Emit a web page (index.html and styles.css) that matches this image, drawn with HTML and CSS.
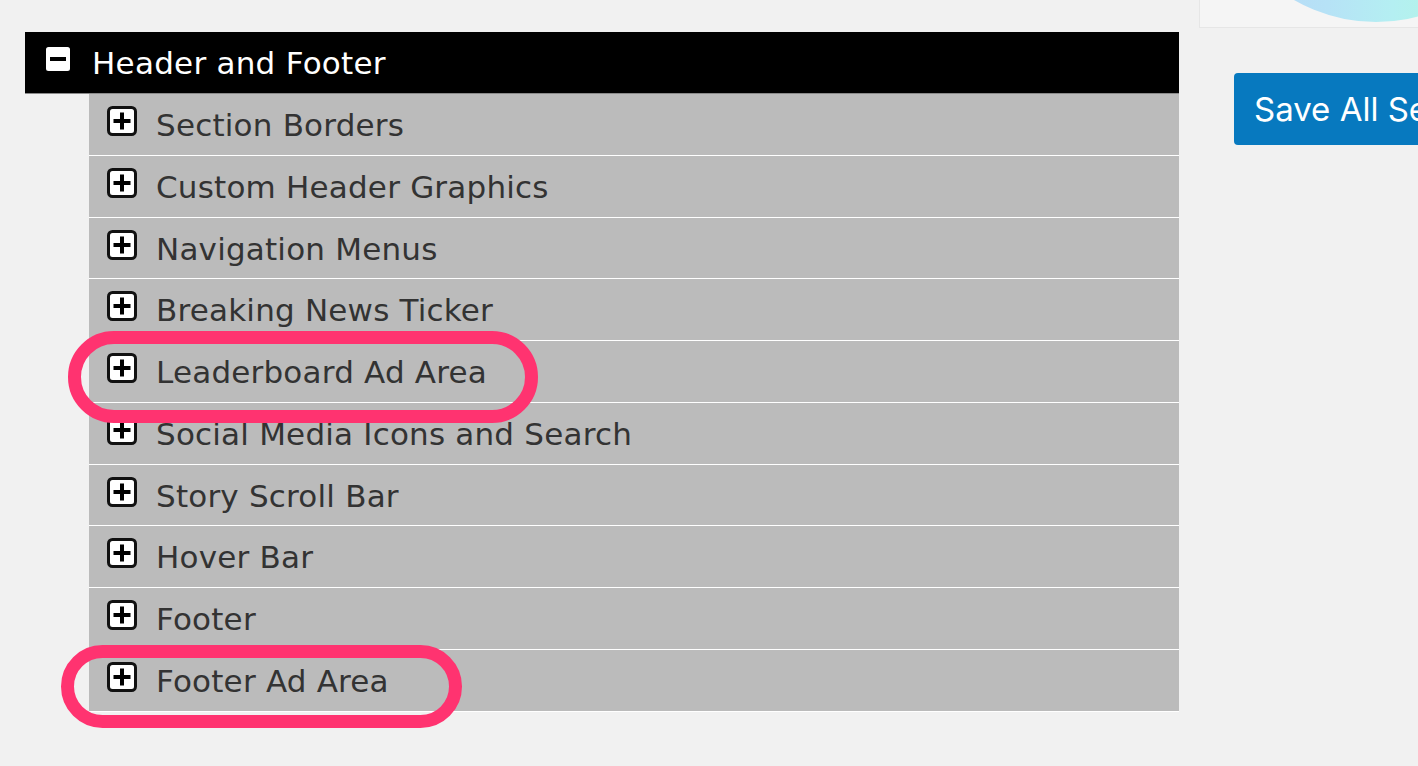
FILE: index.html
```html
<!DOCTYPE html>
<html lang="en">
<head>
<meta charset="utf-8">
<title>Header and Footer</title>
<link rel="stylesheet" href="styles.css">
</head>
<body>
<div class="page">
  <main class="main">
    <section class="group">
      <div class="group-head"><svg class="toggle" width="30" height="30" viewBox="0 0 30 30"><rect x="1.5" y="1.5" width="27" height="27" rx="4" fill="#fff" stroke="#000" stroke-width="3"/><rect x="7" y="13" width="16" height="4" fill="#000"/></svg><span class="group-title">Header and Footer</span></div>
      <ul class="items">
        <li class="item"><svg class="toggle" width="30" height="30" viewBox="0 0 30 30"><rect x="1.5" y="1.5" width="27" height="27" rx="4" fill="#fff" stroke="#111" stroke-width="3"/><rect x="6.5" y="13" width="17" height="4" fill="#000"/><rect x="13" y="6.5" width="4" height="17" fill="#000"/></svg><span>Section Borders</span></li>
        <li class="item"><svg class="toggle" width="30" height="30" viewBox="0 0 30 30"><rect x="1.5" y="1.5" width="27" height="27" rx="4" fill="#fff" stroke="#111" stroke-width="3"/><rect x="6.5" y="13" width="17" height="4" fill="#000"/><rect x="13" y="6.5" width="4" height="17" fill="#000"/></svg><span>Custom Header Graphics</span></li>
        <li class="item"><svg class="toggle" width="30" height="30" viewBox="0 0 30 30"><rect x="1.5" y="1.5" width="27" height="27" rx="4" fill="#fff" stroke="#111" stroke-width="3"/><rect x="6.5" y="13" width="17" height="4" fill="#000"/><rect x="13" y="6.5" width="4" height="17" fill="#000"/></svg><span>Navigation Menus</span></li>
        <li class="item"><svg class="toggle" width="30" height="30" viewBox="0 0 30 30"><rect x="1.5" y="1.5" width="27" height="27" rx="4" fill="#fff" stroke="#111" stroke-width="3"/><rect x="6.5" y="13" width="17" height="4" fill="#000"/><rect x="13" y="6.5" width="4" height="17" fill="#000"/></svg><span>Breaking News Ticker</span></li>
        <li class="item"><svg class="toggle" width="30" height="30" viewBox="0 0 30 30"><rect x="1.5" y="1.5" width="27" height="27" rx="4" fill="#fff" stroke="#111" stroke-width="3"/><rect x="6.5" y="13" width="17" height="4" fill="#000"/><rect x="13" y="6.5" width="4" height="17" fill="#000"/></svg><span>Leaderboard Ad Area</span></li>
        <li class="item"><svg class="toggle" width="30" height="30" viewBox="0 0 30 30"><rect x="1.5" y="1.5" width="27" height="27" rx="4" fill="#fff" stroke="#111" stroke-width="3"/><rect x="6.5" y="13" width="17" height="4" fill="#000"/><rect x="13" y="6.5" width="4" height="17" fill="#000"/></svg><span>Social Media Icons and Search</span></li>
        <li class="item"><svg class="toggle" width="30" height="30" viewBox="0 0 30 30"><rect x="1.5" y="1.5" width="27" height="27" rx="4" fill="#fff" stroke="#111" stroke-width="3"/><rect x="6.5" y="13" width="17" height="4" fill="#000"/><rect x="13" y="6.5" width="4" height="17" fill="#000"/></svg><span>Story Scroll Bar</span></li>
        <li class="item"><svg class="toggle" width="30" height="30" viewBox="0 0 30 30"><rect x="1.5" y="1.5" width="27" height="27" rx="4" fill="#fff" stroke="#111" stroke-width="3"/><rect x="6.5" y="13" width="17" height="4" fill="#000"/><rect x="13" y="6.5" width="4" height="17" fill="#000"/></svg><span>Hover Bar</span></li>
        <li class="item"><svg class="toggle" width="30" height="30" viewBox="0 0 30 30"><rect x="1.5" y="1.5" width="27" height="27" rx="4" fill="#fff" stroke="#111" stroke-width="3"/><rect x="6.5" y="13" width="17" height="4" fill="#000"/><rect x="13" y="6.5" width="4" height="17" fill="#000"/></svg><span>Footer</span></li>
        <li class="item"><svg class="toggle" width="30" height="30" viewBox="0 0 30 30"><rect x="1.5" y="1.5" width="27" height="27" rx="4" fill="#fff" stroke="#111" stroke-width="3"/><rect x="6.5" y="13" width="17" height="4" fill="#000"/><rect x="13" y="6.5" width="4" height="17" fill="#000"/></svg><span>Footer Ad Area</span></li>
      </ul>
    </section>
  </main>
  <aside class="side">
    <div class="card"><div class="blob"></div></div>
    <button class="save" type="button">Save All Settings</button>
  </aside>
  <div class="mark mark-leader"></div>
  <div class="mark mark-footer"></div>
</div>
</body>
</html>
```

FILE: styles.css
```css
html, body {
  margin: 0;
  padding: 0;
  background: #f1f1f1;
  overflow: hidden;
}
.page {
  position: relative;
  width: 1418px;
  height: 766px;
  display: flex;
  gap: 20px;
}
.main {
  width: 1154px;
  margin-left: 25px;
  padding-top: 32px;
  flex: none;
}
.group-head {
  background: #000;
  color: #fff;
  height: 61px;
  line-height: 63px;
  padding-left: 18px;
  border-bottom: 1px solid #8a8a8a;
  font-family: "DejaVu Sans", Verdana, sans-serif;
  font-size: 31px;
  letter-spacing: 0.25px;
  white-space: nowrap;
}
.toggle {
  display: inline-block;
  vertical-align: baseline;
  margin-right: 19px;
}
.items {
  list-style: none;
  margin: 0 0 0 64px;
  padding: 0;
}
.item {
  background: #bbbbbb;
  color: #333;
  height: 60.75px;
  line-height: 63px;
  border-bottom: 1px solid #fff;
  padding-left: 18px;
  font-family: "DejaVu Sans", Verdana, sans-serif;
  font-size: 31px;
  letter-spacing: 0.2px;
  white-space: nowrap;
  overflow: hidden;
}
.side {
  flex: 1;
  min-width: 0;
  display: flex;
  flex-direction: column;
  align-items: flex-start;
}
.card {
  position: relative;
  width: 260px;
  height: 27px;
  background: #f5f5f5;
  border: 1px solid #e6e6e6;
  border-top: none;
  overflow: hidden;
  flex: none;
}
.blob {
  position: absolute;
  left: 14px;
  top: -298px;
  width: 324px;
  height: 320px;
  border-radius: 50%;
  background: linear-gradient(90deg, #b9d4f7 0%, #b6e2f6 35%, #b4eff2 55%, #b2f6e4 75%);
}
.save {
  margin: 45px 0 0 35px;
  height: 72px;
  padding: 0 20px;
  background: #0779bf;
  color: #fff;
  border: none;
  border-radius: 4px;
  font-family: Inter, Roboto, sans-serif;
  font-size: 33px;
  font-weight: 400;
  white-space: nowrap;
  flex: none;
}
.mark {
  position: absolute;
  box-sizing: border-box;
  border: 13px solid #ff3370;
  pointer-events: none;
}
.mark-leader {
  left: 68px;
  top: 331px;
  width: 470px;
  height: 92px;
  border-radius: 46px;
}
.mark-footer {
  left: 61px;
  top: 645px;
  width: 401px;
  height: 83px;
  border-radius: 42px;
}
```
